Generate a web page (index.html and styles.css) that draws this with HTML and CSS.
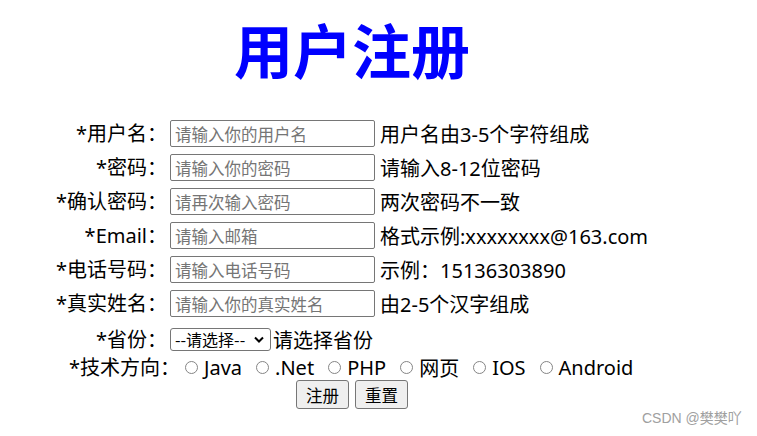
FILE: index.html
```html
<!DOCTYPE html>
<html lang="zh-CN">
<head>
<meta charset="utf-8">
<title>用户注册</title>
<link rel="stylesheet" href="styles.css">
</head>
<body>
<div class="page">
  <h1 class="title">用户注册</h1>
  <form class="form">
    <div class="row">
      <label class="label">*用户名：</label>
      <input class="field" type="text" placeholder="请输入你的用户名">
      <span class="hint">用户名由3-5个字符组成</span>
    </div>
    <div class="row">
      <label class="label">*密码：</label>
      <input class="field" type="password" placeholder="请输入你的密码">
      <span class="hint">请输入8-12位密码</span>
    </div>
    <div class="row">
      <label class="label">*确认密码：</label>
      <input class="field" type="password" placeholder="请再次输入密码">
      <span class="hint">两次密码不一致</span>
    </div>
    <div class="row">
      <label class="label">*Email：</label>
      <input class="field" type="text" placeholder="请输入邮箱">
      <span class="hint">格式示例:xxxxxxxx@163.com</span>
    </div>
    <div class="row">
      <label class="label">*电话号码：</label>
      <input class="field" type="text" placeholder="请输入电话号码">
      <span class="hint">示例：15136303890</span>
    </div>
    <div class="row">
      <label class="label">*真实姓名：</label>
      <input class="field" type="text" placeholder="请输入你的真实姓名">
      <span class="hint">由2-5个汉字组成</span>
    </div>
    <div class="row row-select">
      <label class="label">*省份：</label>
      <span class="select-wrap">
        <select class="select">
          <option>--请选择--</option>
          <option>北京</option>
          <option>上海</option>
          <option>河南</option>
        </select>
        <svg class="chevron" width="10" height="7" viewBox="0 0 10 7"><path d="M1 1.5 L5 5.5 L9 1.5" fill="none" stroke="#000" stroke-width="2"/></svg>
      </span>
      <span class="hint hint-tight">请选择省份</span>
    </div>
    <div class="row row-radio">
      <label class="label label-wide">*技术方向：</label>
      <span class="radios">
        <label class="opt"><input class="radio" type="radio" name="tech">Java</label>
        <label class="opt"><input class="radio" type="radio" name="tech">.Net</label>
        <label class="opt"><input class="radio" type="radio" name="tech">PHP</label>
        <label class="opt"><input class="radio" type="radio" name="tech">网页</label>
        <label class="opt"><input class="radio" type="radio" name="tech">IOS</label>
        <label class="opt"><input class="radio" type="radio" name="tech">Android</label>
      </span>
    </div>
    <div class="row-buttons">
      <button class="btn" type="submit">注册</button>
      <button class="btn" type="reset">重置</button>
    </div>
  </form>
</div>
<div class="watermark">CSDN @樊樊吖</div>
</body>
</html>
```

FILE: styles.css
```css
html, body {
  margin: 0;
  padding: 0;
  background: #ffffff;
}

body {
  font-family: "Noto Sans", "Noto Sans CJK SC", sans-serif;
  font-size: 20px;
  color: #000000;
}

.page {
  width: 704px;
}

.title {
  margin: 0;
  padding-top: 19px;
  height: 60px;
  line-height: 60px;
  font-size: 59px;
  font-weight: bold;
  color: #0000ff;
  text-align: center;
  font-family: "Noto Sans CJK SC", sans-serif;
}

.form {
  margin: 41px 0 0 0;
  display: flex;
  flex-direction: column;
}

.row {
  display: flex;
  align-items: center;
  height: 27px;
  margin-bottom: 7px;
  white-space: nowrap;
}

.label {
  width: 167px;
  flex: none;
  text-align: right;
  line-height: 27px;
}

.label-wide {
  width: 180px;
}

.field {
  box-sizing: border-box;
  width: 205px;
  height: 27px;
  margin: 0 0 0 3px;
  padding: 1px 4px;
  border: 1px solid #767676;
  border-radius: 2px;
  font-family: "Noto Sans CJK SC", sans-serif;
  font-size: 16.5px;
  color: #000;
  background: #fff;
  flex: none;
}

.field::placeholder {
  color: #757575;
}

.hint {
  margin-left: 5px;
}

.hint-tight {
  margin-left: 2px;
}

.row-select {
  height: 30px;
  margin-bottom: 0;
}

.select-wrap {
  position: relative;
  display: inline-flex;
  margin-left: 3px;
  flex: none;
}

.select {
  box-sizing: border-box;
  width: 101px;
  height: 23px;
  margin: 0;
  font-family: "Noto Sans CJK SC", sans-serif;
  font-size: 16px;
  line-height: 21px;
  border: 1px solid #767676;
  border-radius: 3px;
  background: #fff;
  color: #000;
  padding: 0 0 0 4px;
  -webkit-appearance: none;
  appearance: none;
}

.chevron {
  position: absolute;
  right: 7px;
  top: 8px;
  pointer-events: none;
}

.row-radio {
  height: 26px;
  margin-bottom: 0;
}

.radios {
  display: flex;
  align-items: center;
}

.opt {
  display: inline-flex;
  align-items: center;
  margin-right: 9px;
}

.radio {
  -webkit-appearance: none;
  appearance: none;
  box-sizing: border-box;
  width: 13px;
  height: 13px;
  margin: 0 6px 0 5px;
  border: 1px solid #858585;
  border-radius: 50%;
  background: #fff;
}

.row-buttons {
  display: flex;
  justify-content: center;
  gap: 6px;
  height: 29px;
  padding-left: 0;
}

.btn {
  box-sizing: border-box;
  width: 53px;
  height: 29px;
  padding: 0;
  border: 1px solid #767676;
  border-radius: 3px;
  background: #efefef;
  font-family: "Noto Sans CJK SC", sans-serif;
  font-size: 16.5px;
  color: #000;
}

.watermark {
  position: absolute;
  left: 642px;
  top: 407px;
  font-size: 14px;
  color: #a0a0a0;
  font-family: "Liberation Sans", "Noto Sans CJK SC", sans-serif;
}
```
